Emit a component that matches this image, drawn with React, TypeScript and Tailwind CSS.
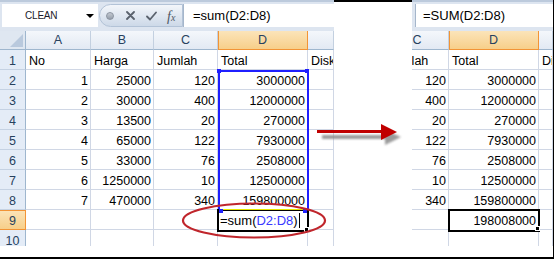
import React from "react";

const FONT = "font-['Liberation_Sans',Arial,sans-serif]";

type V = string | number;

const rows: V[][] = [
  ["No", "Harga", "Jumlah", "Total", "Disk"],
  [1, 25000, 120, 3000000, ""],
  [2, 30000, 400, 12000000, ""],
  [3, 13500, 20, 270000, ""],
  [4, 65000, 122, 7930000, ""],
  [5, 33000, 76, 2508000, ""],
  [6, 1250000, 10, 12500000, ""],
  [7, 470000, 340, 159800000, ""],
  ["", "", "", "", ""],
  ["", "", "", "", ""],
];

const hdr =
  "h-[19px] flex items-center justify-center text-[12.5px] leading-[14px] text-[#27415e] border-b border-[#9eb6ce] bg-gradient-to-b from-[#f4f7fb] to-[#e2e9f3] border-r border-r-[#c3d0e0]";
const hdrSel =
  "h-[19px] flex items-center justify-center text-[12.5px] leading-[14px] text-[#27415e] border-b border-r border-[#f29436] shadow-[inset_1px_0_0_#f29436] bg-gradient-to-b from-[#fbe4b9] to-[#f7cf89]";

function DataCell({ v }: { v: V }) {
  const num = typeof v === "number";
  return (
    <div
      className={
        "h-[20px] flex items-end pb-[1px] overflow-hidden whitespace-nowrap text-[12.5px] leading-[14px] text-black border-r border-b border-[#d0d7e5] " +
        (num ? "justify-end pr-[2px]" : "pl-[3px]")
      }
    >
      {v}
    </div>
  );
}

function FormulaIcons() {
  return (
    <div className="ml-[1px] w-[84px] h-[23px] rounded-l-[12px] border border-[#b3c3d7] bg-gradient-to-b from-[#f3f6fa] to-[#cdd9e8] flex items-center">
      <div className="ml-[6px] w-[8px] h-[8px] rounded-full bg-gradient-to-b from-[#c4cad2] to-[#959eaa] border border-[#8b94a0]" />
      <svg className="ml-[12px]" width="9" height="9" viewBox="0 0 9 9">
        <path d="M1 1 L8 8 M8 1 L1 8" stroke="#5a626d" strokeWidth="1.8" strokeLinecap="round" />
      </svg>
      <svg className="ml-[11px]" width="11" height="10" viewBox="0 0 11 10">
        <path d="M1 5.5 L4 8.5 L10 1.5" stroke="#5a626d" strokeWidth="1.8" fill="none" strokeLinecap="round" strokeLinejoin="round" />
      </svg>
      <span className="ml-[10px] font-['Liberation_Serif',serif] italic text-[#4f5864] leading-none">
        <span className="text-[14px]">f</span>
        <span className="text-[10px]">x</span>
      </span>
    </div>
  );
}

function LeftPanel() {
  return (
    <div className="relative w-[334px] h-[246px] shrink-0 overflow-hidden flex flex-col">
      <div className="h-[31px] shrink-0 bg-[#dde5f0] border-t-2 border-[#bccadc] flex items-start pt-[2px] pl-[2px]">
        <div className="w-[96px] h-[23px] bg-white flex items-center">
          <span className="flex-1 pl-[23px] text-[10px] tracking-[-0.2px] text-[#1a1a2a]">CLEAN</span>
          <div className="mr-[4px] w-0 h-0 border-l-[4px] border-r-[4px] border-t-[4px] border-l-transparent border-r-transparent border-t-black" />
        </div>
        <FormulaIcons />
        <div className="flex-1 h-[23px] bg-white border-l border-[#a5b6cb] pl-[9px] flex items-center text-[13px] text-black">
          =sum(D2:D8)
        </div>
      </div>
      <div className="grid grid-cols-[26px_65px_63px_64px_90px_26px]">
        <div className="h-[19px] bg-[#dfe7f1] border-r border-b border-[#9eb6ce] flex items-end justify-end pr-[2px] pb-[2px]">
          <svg width="13" height="13" viewBox="0 0 13 13">
            <polygon points="13,0 13,13 0,13" fill="#b9c9dd" />
          </svg>
        </div>
        <div className={hdr}>A</div>
        <div className={hdr}>B</div>
        <div className={hdr}>C</div>
        <div className={hdrSel}>D</div>
        <div className={hdr}></div>
        {rows.map((r, i) => (
          <React.Fragment key={i}>
            <div
              className={
                "h-[20px] flex items-end justify-center pb-[1px] text-[12.5px] leading-[14px] text-[#27415e] border-r " +
                (i === 8
                  ? "bg-gradient-to-b from-[#fbe4b9] to-[#f7cf89] border-[#f29436] border-b shadow-[inset_0_1px_0_#f29436]"
                  : "bg-[#e4ecf7] border-r-[#9eb6ce] border-b border-b-[#c5d2e3]")
              }
            >
              {i + 1}
            </div>
            {r.map((v, j) => (
              <DataCell key={j} v={v} />
            ))}
          </React.Fragment>
        ))}
      </div>
      {/* selection range */}
      <div className="absolute left-[218px] top-[70px] w-[91px] h-[141px] border-2 border-[#1f1fff]" />
      <div className="absolute left-[217px] top-[69px] w-[4px] h-[4px] bg-[#1f1fff]" />
      <div className="absolute left-[305px] top-[69px] w-[4px] h-[4px] bg-[#1f1fff]" />
      {/* editing cell */}
      <div className="absolute left-[217px] top-[209px] w-[92px] h-[23px] border-2 border-black bg-white flex items-center pl-[1px] text-[13px] leading-[15px] text-black">
        <div className="absolute left-0 right-0 top-[-2px] h-[1px] bg-[#e6e600]" />
        <div className="absolute left-[0px] top-[-2px] w-[4px] h-[4px] bg-[#1f1fff]" />
        <div className="absolute right-[0px] top-[-2px] w-[4px] h-[4px] bg-[#1f1fff]" />
        <span>=sum(</span>
        <span className="text-[#3a3aff]">D2:D8</span>
        <span>)</span>
        <div className="ml-[1px] w-[1px] h-[15px] bg-black" />
        <div className="absolute right-[-2px] bottom-[-2px] w-[5px] h-[5px] bg-black border border-white" />
      </div>
    </div>
  );
}

function RightPanel() {
  return (
    <div className="relative w-[141px] h-[246px] shrink-0 overflow-hidden flex flex-col">
      <div className="h-[31px] shrink-0 bg-[#dde5f0] border-t-2 border-[#bccadc] flex items-start pt-[2px] pl-[3px]">
        <div className="flex-1 h-[23px] bg-white border-l border-[#a5b6cb] pl-[7px] flex items-center text-[13px] text-black">
          =SUM(D2:D8)
        </div>
      </div>
      <div className="grid grid-cols-[37px_90px_14px]">
        <div className={hdr + " !justify-start overflow-hidden"}>
          <div className="w-[64px] shrink-0 ml-[-27px] text-center">C</div>
        </div>
        <div className={hdrSel}>D</div>
        <div className={hdr}></div>
        {rows.map((r, i) => (
          <React.Fragment key={i}>
            {i === 0 ? (
              <div className="h-[20px] flex items-end pb-[1px] overflow-hidden whitespace-nowrap text-[12.5px] leading-[14px] text-black border-r border-b border-[#d0d7e5]">
                <div className="w-[64px] shrink-0 ml-[-27px] pl-[3px]">Jumlah</div>
              </div>
            ) : (
              <DataCell v={r[2]} />
            )}
            <DataCell v={i === 8 ? "" : r[3]} />
            <DataCell v={r[4]} />
          </React.Fragment>
        ))}
      </div>
      <div className="absolute left-[36px] top-[209px] w-[92px] h-[23px] border-2 border-black bg-white flex items-center justify-end pr-[2px] text-[12.5px] leading-[14px] text-black">
        198008000
        <div className="absolute right-[-2px] bottom-[-1px] w-[5px] h-[5px] bg-black border border-white" />
      </div>
    </div>
  );
}

export default function App() {
  return (
    <div className={`relative w-[554px] h-[259px] bg-white overflow-hidden ${FONT}`}>
      <div className="flex h-full items-start border-r border-b-2 border-black">
        <LeftPanel />
        <div className="w-[78px] h-full border-t-2 border-black" />
        <RightPanel />
      </div>
      <svg className="absolute left-[181px] top-[201px]" width="150" height="40" viewBox="0 0 150 40">
        <ellipse cx="73" cy="19.5" rx="71" ry="17" fill="none" stroke="#c0262c" strokeWidth="2.2" />
      </svg>
      <svg className="absolute left-[312px] top-[118px]" width="95" height="32" viewBox="0 0 95 32">
        <defs>
          <filter id="arrowblur" x="-20%" y="-100%" width="140%" height="300%">
            <feGaussianBlur stdDeviation="1.3" />
          </filter>
        </defs>
        <g filter="url(#arrowblur)" fill="#8a8a8a" opacity="0.85">
          <rect x="10" y="17" width="66" height="4" />
          <polygon points="73,12 89,19 73,27" />
        </g>
        <rect x="5" y="12" width="66" height="3" fill="#c00000" />
        <polygon points="69,6 85,14 69,22" fill="#c00000" />
      </svg>
    </div>
  );
}
